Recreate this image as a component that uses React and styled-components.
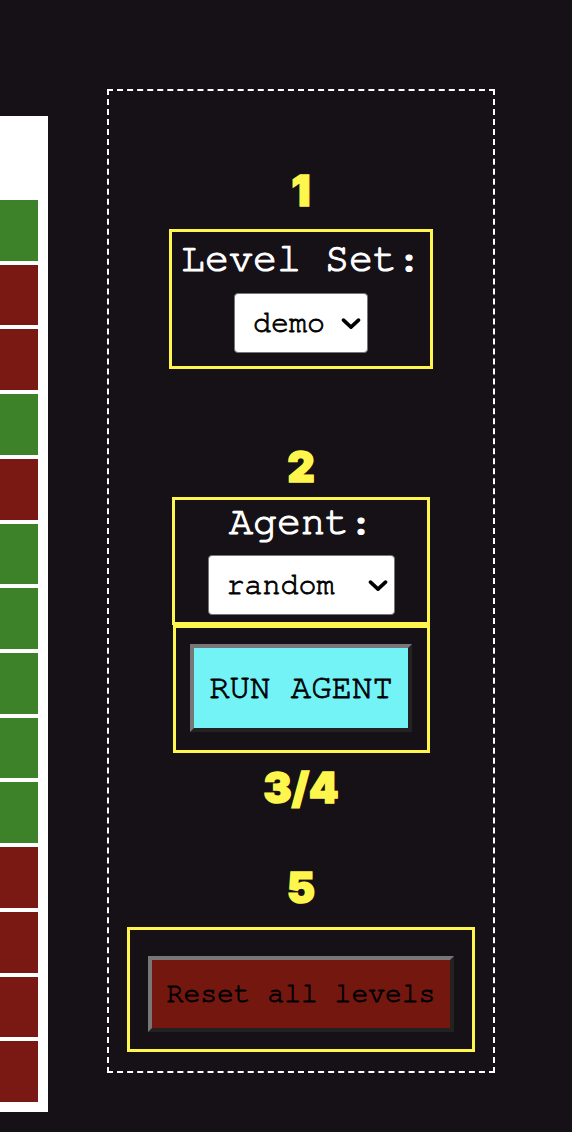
import React from 'react'
import styled, { createGlobalStyle } from 'styled-components'

const GlobalStyle = createGlobalStyle`
    html, body {
        margin: 0;
        padding: 0;
        background: #151116;
        height: 1132px;
        overflow: hidden;
    }
`

const YELLOW = '#fff64d'
const MONO = '"Nimbus Mono PS", "Nimbus Mono L", FreeMono, "Courier 10 Pitch", "Liberation Mono", monospace'

const cells = ['g', 'r', 'r', 'g', 'r', 'g', 'g', 'g', 'g', 'g', 'r', 'r', 'r', 'r']

const Chevron = () => (
    <svg width="20" height="12" viewBox="0 0 20 12">
        <polyline points="2.5,2.5 10,9.5 17.5,2.5" fill="none" stroke="#000" strokeWidth="3.6" strokeLinecap="round" strokeLinejoin="round" />
    </svg>
)

const Dropdown = ({ width, value }) => (
    <SelectWrap width={width}>
        <Select defaultValue={value}>
            <option value={value}>{value}</option>
        </Select>
        <Arrow><Chevron /></Arrow>
    </SelectWrap>
)

const App = () => {
    return <Page>
        <GlobalStyle />
        <Board>
            {cells.map((c, i) => <Cell key={i} done={c === 'g'} />)}
        </Board>
        <Panel>
            <Step>1</Step>
            <Box width={264} pad="5px 0 13px" top={14}>
                <Label>Level Set:</Label>
                <Field gap={11}>
                    <Dropdown width={134} value="demo" />
                </Field>
            </Box>

            <Step top={74}>2</Step>
            <Box width={258} pad="0 0 7px" top={6}>
                <Label>Agent:</Label>
                <Field gap={10}>
                    <Dropdown width={187} value="random" />
                </Field>
            </Box>
            <Box width={257} pad="16px 0 18px">
                <Button w={222} h={88} bg="#74f3f7" size={34}>RUN AGENT</Button>
            </Box>
            <Step top={11}>3/4</Step>

            <Step top={52}>5</Step>
            <Box width={348} pad="26px 0 17px" top={15}>
                <Button w={306} h={76} bg="#74170f" size={28}>Reset all levels</Button>
            </Box>
        </Panel>
    </Page>
}

const Page = styled.div`
    display: flex;
    align-items: flex-start;
`

const Board = styled.div`
    width: 48px;
    height: 996px;
    margin-top: 116px;
    box-sizing: border-box;
    padding: 84px 10px 10px 0;
    background: #ffffff;
    display: flex;
    flex-direction: column;
    gap: 4px;
    flex-shrink: 0;
`

const Cell = styled.div`
    flex: 1;
    background: ${({ done }) => done ? '#3d8228' : '#7a1913'};
`

const Panel = styled.div`
    width: 388px;
    height: 984px;
    margin: 89px 0 0 59px;
    box-sizing: border-box;
    border: 2px dashed #ffffff;
    padding-top: 76px;
    display: flex;
    flex-direction: column;
    align-items: center;
    flex-shrink: 0;
`

const Step = styled.div`
    margin-top: ${({ top }) => top || 0}px;
    font-family: Inter, "Liberation Sans", sans-serif;
    font-weight: 900;
    font-size: 42px;
    line-height: 48px;
    color: ${YELLOW};
    -webkit-text-stroke: 1.6px ${YELLOW};
`

const Box = styled.div`
    width: ${({ width }) => width}px;
    margin-top: ${({ top }) => top || 0}px;
    box-sizing: border-box;
    border: 3px solid ${YELLOW};
    padding: ${({ pad }) => pad};
    display: flex;
    flex-direction: column;
    align-items: center;
`

const Label = styled.div`
    font-family: ${MONO};
    font-size: 40px;
    line-height: 45px;
    color: #ffffff;
    -webkit-text-stroke: 1.2px #ffffff;
    white-space: nowrap;
`

const Field = styled.div`
    margin-top: ${({ gap }) => gap}px;
`

const SelectWrap = styled.div`
    position: relative;
    width: ${({ width }) => width}px;
    height: 60px;
`

const Select = styled.select`
    appearance: none;
    width: 100%;
    height: 100%;
    box-sizing: border-box;
    border: 1px solid #767676;
    border-radius: 4px;
    background: #ffffff;
    color: #000000;
    font-family: ${MONO};
    font-size: 30px;
    -webkit-text-stroke: 0.8px #000000;
    padding: 0 0 0 18px;
    outline: none;
`

const Arrow = styled.span`
    position: absolute;
    right: 7px;
    top: 50%;
    transform: translateY(-45%);
    display: flex;
    pointer-events: none;
`

const Button = styled.button`
    width: ${({ w }) => w}px;
    height: ${({ h }) => h}px;
    box-sizing: border-box;
    border-style: solid;
    border-width: 4px;
    border-color: #777777 #222222 #222222 #777777;
    background: ${({ bg }) => bg};
    color: #000000;
    font-family: ${MONO};
    font-size: ${({ size }) => size}px;
    -webkit-text-stroke: 0.8px #000000;
    padding: 0;
    cursor: pointer;
`

export default App
